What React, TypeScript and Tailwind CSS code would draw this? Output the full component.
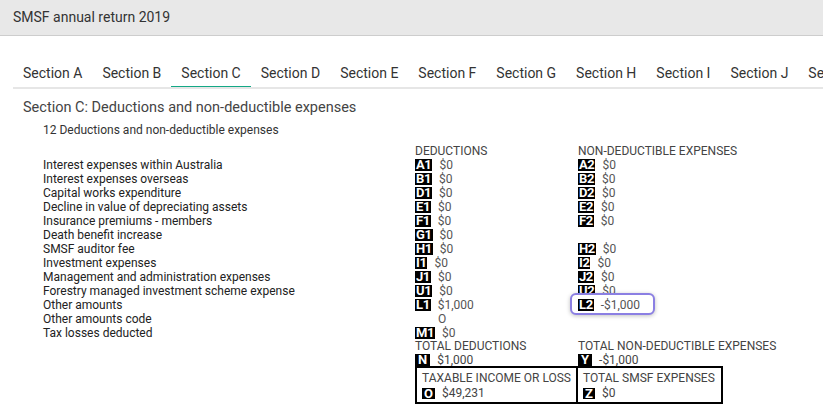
import React from "react";

const tabs = ["Section A","Section B","Section C","Section D","Section E","Section F","Section G","Section H","Section I","Section J","Section K"];

type Cell = { code?: string; value?: string; plain?: string; focus?: boolean } | null;

const rows: { label: string; c1: Cell; c2: Cell }[] = [
  { label: "Interest expenses within Australia", c1: { code: "A1", value: "$0" }, c2: { code: "A2", value: "$0" } },
  { label: "Interest expenses overseas", c1: { code: "B1", value: "$0" }, c2: { code: "B2", value: "$0" } },
  { label: "Capital works expenditure", c1: { code: "D1", value: "$0" }, c2: { code: "D2", value: "$0" } },
  { label: "Decline in value of depreciating assets", c1: { code: "E1", value: "$0" }, c2: { code: "E2", value: "$0" } },
  { label: "Insurance premiums - members", c1: { code: "F1", value: "$0" }, c2: { code: "F2", value: "$0" } },
  { label: "Death benefit increase", c1: { code: "G1", value: "$0" }, c2: null },
  { label: "SMSF auditor fee", c1: { code: "H1", value: "$0" }, c2: { code: "H2", value: "$0" } },
  { label: "Investment expenses", c1: { code: "I1", value: "$0" }, c2: { code: "I2", value: "$0" } },
  { label: "Management and administration expenses", c1: { code: "J1", value: "$0" }, c2: { code: "J2", value: "$0" } },
  { label: "Forestry managed investment scheme expense", c1: { code: "U1", value: "$0" }, c2: { code: "U2", value: "$0" } },
  { label: "Other amounts", c1: { code: "L1", value: "$1,000" }, c2: { code: "L2", value: "-$1,000", focus: true } },
  { label: "Other amounts code", c1: { plain: "O" }, c2: null },
  { label: "Tax losses deducted", c1: { code: "M1", value: "$0" }, c2: null },
];

function Badge({ code }: { code: string }) {
  return (
    <span className="inline-block bg-black text-white font-bold text-[13px] leading-[12px] px-[1px] tracking-[-0.4px]">
      {code}
    </span>
  );
}

function CellView({ cell }: { cell: Cell }) {
  if (!cell) return <div className="h-[14px]" />;
  if (cell.plain) {
    return <div className="h-[14px] pl-[23px] text-[#555]">{cell.plain}</div>;
  }
  return (
    <div className="h-[14px] flex items-center">
      <span className="relative inline-flex items-center">
        {cell.focus && (
          <span className="absolute left-[-8px] top-[-5px] w-[85px] h-[22px] rounded-[6px] border-2 border-[#8b7fe3] bg-white shadow-[0_1px_4px_rgba(0,0,0,0.25)]" />
        )}
        <span className="relative inline-flex items-center">
          <Badge code={cell.code!} />
          <span className="ml-[7px] text-[#555]">{cell.value}</span>
        </span>
      </span>
    </div>
  );
}

export default function App() {
  return (
    <div
      className="w-[823px] h-[411px] overflow-hidden bg-white text-[#333]"
      style={{ fontFamily: "Roboto, 'Liberation Sans', sans-serif" }}
    >
      <div className="h-[36px] bg-[#e8e8e8] border-b border-[#cdcdcd] flex items-center px-[13px] text-[14px] text-[#333]">
        SMSF annual return 2019
      </div>

      <div className="mt-[21px] ml-[13px] flex border-b-2 border-[#e6e6e6] whitespace-nowrap overflow-hidden">
        {tabs.map((t) => (
          <div
            key={t}
            className={
              "shrink-0 px-[10px] pt-[8px] pb-[5px] leading-[16px] text-[14px] text-[#333] -mb-[2px] border-b-[3px] " +
              (t === "Section C" ? "border-[#13a886]" : "border-transparent")
            }
          >
            {t}
          </div>
        ))}
      </div>

      <div className="pl-[23px] mt-[10px] text-[14.5px] leading-[18px] text-[#444]">
        Section C: Deductions and non-deductible expenses
      </div>
      <div className="pl-[43px] mt-[6px] text-[12px] leading-[14px] text-[#333]">
        12 Deductions and non-deductible expenses
      </div>

      <div className="pl-[43px] mt-[7px] text-[12px] leading-[14px]">
        <div className="grid grid-cols-[372px_163px_1fr]">
          <div />
          <div className="text-[#444]">DEDUCTIONS</div>
          <div className="text-[#444]">NON-DEDUCTIBLE EXPENSES</div>
          {rows.map((r) => (
            <React.Fragment key={r.label}>
              <div className="text-[#222] h-[14px]">{r.label}</div>
              <CellView cell={r.c1} />
              <CellView cell={r.c2} />
            </React.Fragment>
          ))}
          <div className="h-[13px]" />
          <div className="text-[#444] h-[13px] leading-[13px]">TOTAL DEDUCTIONS</div>
          <div className="text-[#444] h-[13px] leading-[13px]">TOTAL NON-DEDUCTIBLE EXPENSES</div>
          <div className="h-[13px]" />
          <div className="flex items-center h-[13px]">
            <span className="inline-block bg-black text-white font-bold text-[13px] leading-[12px] px-[3px]">N</span>
            <span className="ml-[7px] text-[#444]">$1,000</span>
          </div>
          <div className="flex items-center h-[13px]">
            <span className="inline-block bg-black text-white font-bold text-[13px] leading-[12px] px-[3px]">Y</span>
            <span className="ml-[7px] text-[#444]">-$1,000</span>
          </div>
        </div>
        <div className="flex ml-[372px]">
          <div className="w-[163px] h-[38px] border-2 border-black px-[5px] pt-[3px]">
            <div className="text-[#444]">TAXABLE INCOME OR LOSS</div>
            <div className="flex items-center mt-[1px]">
              <span className="inline-block bg-black text-white font-bold text-[13px] leading-[11px] px-[2px]">O</span>
              <span className="ml-[7px] text-[#444]">$49,231</span>
            </div>
          </div>
          <div className="w-[145px] h-[38px] border-2 border-l-0 border-black px-[5px] pt-[3px]">
            <div className="text-[#444]">TOTAL SMSF EXPENSES</div>
            <div className="flex items-center mt-[1px]">
              <span className="inline-block bg-black text-white font-bold text-[13px] leading-[11px] px-[2px]">Z</span>
              <span className="ml-[7px] text-[#444]">$0</span>
            </div>
          </div>
        </div>
      </div>
    </div>
  );
}
